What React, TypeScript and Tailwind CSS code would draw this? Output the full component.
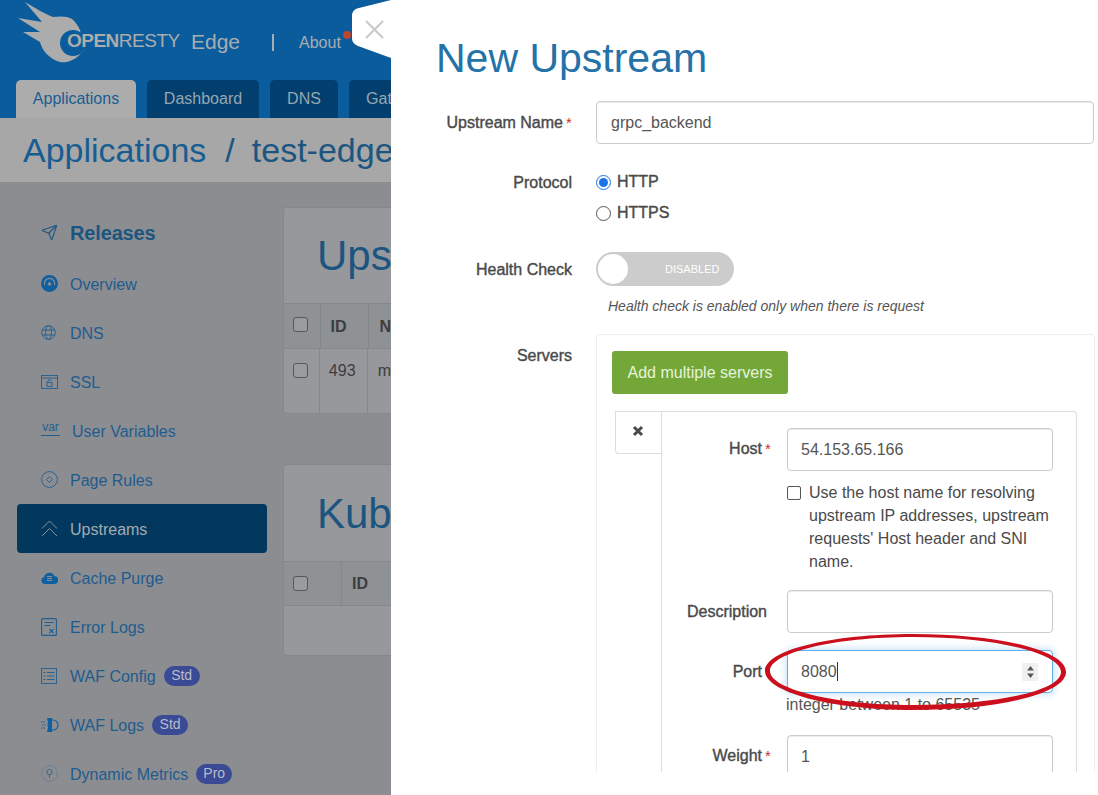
import { Send } from "lucide-react";
import type { ReactNode } from "react";

const sans = "font-['Liberation_Sans',Arial,sans-serif]";
const heavy = "[-webkit-text-stroke:0.4px_currentColor]";

function Overview() {
  return (
    <svg width="17" height="17" viewBox="0 0 17 17">
      <circle cx="8.5" cy="8.5" r="8.5" fill="#0f5f9f" />
      <path d="M3.5 10a5.2 5.2 0 1 1 10 0" fill="none" stroke="#8c8d91" strokeWidth="1.3" />
      <circle cx="8.5" cy="9" r="1.8" fill="#8c8d91" />
    </svg>
  );
}

function Globe() {
  return (
    <svg width="15" height="15" viewBox="0 0 15 15" fill="none" stroke="#1f5f92" strokeWidth="0.9">
      <circle cx="7.5" cy="7.5" r="6.8" />
      <ellipse cx="7.5" cy="7.5" rx="3" ry="6.8" />
      <path d="M1 5h13M1 10h13" />
    </svg>
  );
}

function SslIcon() {
  return (
    <svg width="17" height="14" viewBox="0 0 17 14" fill="none" stroke="#1f5f92" strokeWidth="0.9">
      <rect x="0.5" y="0.5" width="16" height="13" />
      <path d="M0.5 3h16" />
      <rect x="6" y="7.5" width="5" height="4" />
      <path d="M7 7.5V6a1.5 1.5 0 0 1 3 0" />
    </svg>
  );
}

function PageRuleIcon() {
  return (
    <svg width="17" height="17" viewBox="0 0 17 17" fill="none" stroke="#1f5f92" strokeWidth="0.9">
      <circle cx="8.5" cy="8.5" r="7.9" />
      <path d="M8.5 5.5l3 3-3 3-3-3z" />
    </svg>
  );
}

function UpstreamIcon() {
  return (
    <svg width="17" height="17" viewBox="0 0 17 17" fill="none" stroke="#87939c" strokeWidth="1">
      <path d="M1 8.5L8.5 1L16 8.5M1 16L8.5 8.5L16 16" />
    </svg>
  );
}

function CloudIcon() {
  return (
    <svg width="17" height="12" viewBox="0 0 17 12">
      <path d="M4 12a3.6 3.6 0 0 1-.8-7.1A5.4 5.4 0 0 1 13.4 4 4 4 0 0 1 13 12z" fill="#0f5f9f" />
      <path d="M6 4.5h5M6 6.5h5M6 8.5h5" stroke="#8c8d91" strokeWidth="1" />
    </svg>
  );
}

function ErrorIcon() {
  return (
    <svg width="16" height="18" viewBox="0 0 16 18" fill="none" stroke="#1f5f92" strokeWidth="1.1">
      <rect x="0.6" y="0.6" width="14.8" height="16.8" rx="1" />
      <path d="M3.5 4.5h9M3.5 7.5h6M8.5 11l4 4M12.5 11l-4 4" />
    </svg>
  );
}

function ListIcon() {
  return (
    <svg width="16" height="16" viewBox="0 0 16 16" fill="none" stroke="#1f5f92" strokeWidth="0.9">
      <rect x="0.5" y="0.5" width="15" height="15" />
      <path d="M2.5 4.5h2M6 4.5h7.5M2.5 8h2M6 8h7.5M2.5 11.5h2M6 11.5h7.5" />
    </svg>
  );
}

function WafLogIcon() {
  return (
    <svg width="18" height="16" viewBox="0 0 18 16" fill="none" stroke="#0f5f9f">
      <path d="M6 1h5v14H6l1.5-7z" fill="#0f5f9f" stroke="none" />
      <circle cx="12" cy="8" r="5" strokeWidth="1.1" />
      <path d="M0 5h4M1 8h3.5M0 11h4" strokeWidth="1" strokeDasharray="1.5 1" />
    </svg>
  );
}

function MetricIcon() {
  return (
    <svg width="17" height="17" viewBox="0 0 17 17" fill="none" stroke="#1f5f92" strokeWidth="0.8">
      <circle cx="8.5" cy="8.5" r="7.9" stroke="#5b7f9c" />
      <circle cx="8.5" cy="7" r="2.6" />
      <path d="M8.5 9.6v3.4" />
    </svg>
  );
}

function Badge({ text }: { text: string }) {
  return (
    <span className="ml-2 flex h-[20px] w-[36px] items-center justify-center rounded-full bg-[#3a4a94] text-[14px] text-[#b9bcc8]">
      {text}
    </span>
  );
}

function SideItem({ icon, label, badge }: { icon: ReactNode; label: string; badge?: string }) {
  return (
    <div className="flex h-[49px] items-center pl-[24px]">
      <div className="flex w-[29px] shrink-0 items-center">{icon}</div>
      <span className="mt-[2px] text-[16px] text-[#1f5c8e]">{label}</span>
      {badge && <Badge text={badge} />}
    </div>
  );
}

function Sidebar() {
  return (
    <div className="w-[283px] shrink-0 pt-[26px] pl-[17px] pr-[16px]">
      <div className="flex h-[51px] items-center pb-[2px] pl-[24px]">
        <div className="flex w-[29px]">
          <Send size={17} color="#1c5680" strokeWidth={1.6} />
        </div>
        <span className="text-[20px] font-bold tracking-[-0.15px] text-[#1c5680]">Releases</span>
      </div>
      <SideItem icon={<Overview />} label="Overview" />
      <SideItem icon={<Globe />} label="DNS" />
      <SideItem icon={<SslIcon />} label="SSL" />
      <div className="flex h-[49px] items-center pl-[24px]">
        <div className="mr-[12px] -mt-[4px] flex w-[19px] flex-col items-center border-b border-[#1f5f92] pb-[2px] text-[12px] leading-[12px] text-[#1f5f92]">
          var
        </div>
        <span className="mt-[2px] text-[16px] text-[#1f5c8e]">User Variables</span>
      </div>
      <SideItem icon={<PageRuleIcon />} label="Page Rules" />
      <div className="flex h-[49px] items-center rounded-[4px] bg-[#02385e] pl-[24px]">
        <div className="flex w-[29px]">
          <UpstreamIcon />
        </div>
        <span className="mt-[2px] text-[16px] text-[#a3abb2]">Upstreams</span>
      </div>
      <SideItem icon={<CloudIcon />} label="Cache Purge" />
      <SideItem icon={<ErrorIcon />} label="Error Logs" />
      <SideItem icon={<ListIcon />} label="WAF Config" badge="Std" />
      <SideItem icon={<WafLogIcon />} label="WAF Logs" badge="Std" />
      <SideItem icon={<MetricIcon />} label="Dynamic Metrics" badge="Pro" />
    </div>
  );
}

function CheckBox() {
  return <div className="h-[15px] w-[15px] rounded-[3px] border border-[#55575a] bg-[#9a9b9e]" />;
}

function Cards() {
  return (
    <div className="w-[108px] shrink-0 pt-[25px] text-[#3c3d3f]">
      <div className="rounded-l-[3px] border border-r-0 border-[#85878a] bg-[#97989b]">
        <div className="flex h-[95px] items-center pl-[33px] text-[42px] text-[#1c5680]">Ups</div>
        <div className="flex h-[46px] border-t border-b border-[#85878a] bg-[#8e9295] text-[16px] font-bold">
          <div className="h-full w-[38px] border-r border-[#85878a] pt-[13px] pl-[9px]">
            <CheckBox />
          </div>
          <div className="flex h-full w-[51px] items-center border-r border-[#85878a] pt-[2px] pl-[10px]">ID</div>
          <div className="flex items-center pt-[2px] pl-[10px]">N</div>
        </div>
        <div className="flex h-[64px] text-[16px]">
          <div className="h-full w-[38px] border-r border-[#85878a] pt-[14px] pl-[9px]">
            <CheckBox />
          </div>
          <div className="h-full w-[51px] border-r border-[#85878a] pt-[10px] pl-[9px]">493</div>
          <div className="pt-[10px] pl-[10px]">m</div>
        </div>
      </div>
      <div className="mt-[50px] rounded-l-[3px] border border-r-0 border-[#85878a] bg-[#97989b]">
        <div className="flex h-[96px] items-center pl-[33px] text-[42px] text-[#1c5680]">Kub</div>
        <div className="flex h-[45px] border-t border-b border-[#85878a] bg-[#8e9295] text-[16px] font-bold">
          <div className="h-full w-[58px] border-r border-[#85878a] pt-[14px] pl-[9px]">
            <CheckBox />
          </div>
          <div className="flex items-center pl-[10px]">ID</div>
        </div>
        <div className="h-[49px]" />
      </div>
    </div>
  );
}

function Tab({ label, className }: { label: string; className: string }) {
  return (
    <div className={`flex h-[38px] shrink-0 items-center justify-center rounded-t-[5px] text-[16px] ${className}`}>
      {label}
    </div>
  );
}

function Logo() {
  return (
    <div className="relative h-[64px] w-[181px] shrink-0">
      <svg width="90" height="64" viewBox="0 0 90 64" className="absolute top-0 left-0">
        <path
          d="M25 2C35 8 45 14 53 17C60 16 68 16 72 19C76 22 78 26 80 30L84 50C75 62 65 63 60 62C50 59 42 51 40 42L23 32L40 32L18 18L42 22Z"
          fill="#acacac"
        />
        <circle cx="73" cy="43" r="13" fill="#0a5c9c" />
      </svg>
      <div className="absolute top-[30px] left-[67px] flex text-[19px] leading-[22px] tracking-[-0.5px] text-[#acacac]">
        <span className="font-bold">OPEN</span>
        <span>RESTY</span>
      </div>
    </div>
  );
}

function LeftPage() {
  return (
    <div className="relative h-full w-[391px] shrink-0 overflow-hidden bg-[#8c8d91]">
      <div className="h-[118px] bg-[#0a5c9c]">
        <div className="flex h-[80px] items-start">
          <Logo />
          <span className="mt-[28px] ml-[10px] text-[21px] leading-[28px] text-[#a8adb2]">Edge</span>
          <span className="mt-[34px] ml-[32px] h-[17px] w-[2px] shrink-0 bg-[#a8adb2]" />
          <span className="mt-[32px] ml-[25px] text-[16px] leading-[22px] text-[#a8adb2]">About</span>
          <span className="mt-[31px] ml-[2px] h-[8px] w-[8px] shrink-0 rounded-full bg-[#c0452a]" />
        </div>
        <div className="flex gap-[11px] pl-[16px]">
          <Tab label="Applications" className="w-[120px] bg-[#acacac] text-[#185d92]" />
          <Tab label="Dashboard" className="w-[112px] bg-[#023f6e] text-[#98a6b1]" />
          <Tab label="DNS" className="w-[68px] bg-[#023f6e] text-[#98a6b1]" />
          <Tab label="Gat" className="w-[60px] bg-[#023f6e] text-[#98a6b1]" />
        </div>
      </div>
      <div className="flex h-[64px] items-center bg-[#a7a7a8] pl-[23px] text-[34px] whitespace-nowrap text-[#185d92]">
        <span>Applications</span>
        <span className="ml-[19px] text-[#1c5680]">/</span>
        <span className="ml-[17px] text-[#1c5680]">test-edge</span>
      </div>
      <div className="flex">
        <Sidebar />
        <Cards />
      </div>
      <svg width="39" height="58" viewBox="0 0 39 58" className="absolute top-0 right-0">
        <path d="M39 0L7 8C2 9 0 12 0 16V38C0 42 2 44 6 46L39 58Z" fill="#ffffff" />
        <path d="M14 21L31 38M31 21L14 38" stroke="#c8c8c8" strokeWidth="2" />
      </svg>
    </div>
  );
}

function Label({ text, star, className }: { text: string; star?: boolean; className?: string }) {
  return (
    <div className={`flex justify-end text-[16px] leading-[22px] text-[#4a4a4a] ${heavy} ${className ?? ""}`}>
      <span>{text}</span>
      {star && <span className="ml-[3px] w-[6px] text-[15px] text-[#c9302c] [-webkit-text-stroke:0]">*</span>}
    </div>
  );
}

function TextBox({ value, inner }: { value: string; inner?: boolean }) {
  return (
    <input
      readOnly
      value={value}
      className={`block h-[43px] w-full rounded-[4px] border border-[#cccccc] bg-white text-[16px] text-[#555555] shadow-[inset_0_1px_1px_rgba(0,0,0,0.08)] outline-none ${
        inner ? "px-[13px]" : "px-[14px]"
      }`}
    />
  );
}

function ServerItem() {
  return (
    <div className="mt-[17px] grid w-[465px] grid-cols-[46px_1fr] pl-[3px]">
      <div className="flex h-[43px] justify-center rounded-bl-[4px] border-t border-b border-l border-[#dddddd] pt-[12px] pr-[1px]">
        <svg width="12" height="12" viewBox="0 0 12 12" className="mt-[1px]">
          <path d="M2 2L10 10M10 2L2 10" stroke="#4a4a4a" strokeWidth="3" />
        </svg>
      </div>
      <div className="rounded-tr-[4px] border-t border-r border-l border-[#dddddd] pt-[16px] pb-[40px]">
        <div className="grid grid-cols-[109px_266px] gap-x-[16px]">
          <Label text="Host" star className="pt-[10px]" />
          <TextBox value="54.153.65.166" inner />

          <div />
          <div className="mt-[10px] flex text-[16px] leading-[23px] text-[#4a4a4a]">
            <div className="mt-[5px] mr-[8px] h-[14px] w-[14px] shrink-0 rounded-[2px] border border-[#555555] bg-white" />
            <div className="w-[240px]">
              Use the host name for resolving upstream IP addresses, upstream requests' Host header and SNI name.
            </div>
          </div>

          <div className="col-span-2 h-[17px]" />
          <Label text="Description" className="pt-[11px] pr-[4px]" />
          <TextBox value="" inner />

          <div className="col-span-2 h-[17px]" />
          <Label text="Port" className="pt-[11px] pr-[9px]" />
          <div className="flex h-[43px] items-center rounded-[4px] border border-[#66afe9] bg-white px-[13px] text-[16px] text-[#555555] shadow-[0_0_8px_rgba(102,175,233,0.5)]">
            <span>8080</span>
            <span className="h-[19px] w-[1px] bg-[#333333]" />
            <div className="ml-auto mr-[1px] flex h-[18px] w-[16px] items-center justify-center bg-[#f0f0f0]">
              <svg width="9" height="14" viewBox="0 0 9 14">
                <path d="M4.5 1L8 5.5H1zM4.5 13L1 8.5h7z" fill="#555555" />
              </svg>
            </div>
          </div>

          <div />
          <div className="mt-[1px] -ml-[1px] h-[22px] text-[16px] leading-[22px] text-[#555555]">integer between 1 to 65535</div>

          <div className="col-span-2 h-[19px]" />
          <Label text="Weight" star className="pt-[10px]" />
          <TextBox value="1" inner />
        </div>
      </div>
    </div>
  );
}

function FormPanel() {
  return (
    <div className="h-full flex-1 bg-white">
      <div className="h-[772px] overflow-hidden">
        <div className="flex h-[101px] items-start pt-[33px] pl-[45px] text-[41px] leading-[50px] text-[#2472a8]">New Upstream</div>

        <div className="grid grid-cols-[181px_498px] gap-x-[24px]">
          <Label text="Upstream Name" star className="pt-[11px]" />
          <TextBox value="grpc_backend" />

          <div className="col-span-2 h-[27px]" />
          <Label text="Protocol" className="pt-[1px]" />
          <div className="text-[16px] leading-[22px] text-[#4a4a4a]">
            <div className="flex h-[22px] items-center gap-[6px]">
              <span className="flex h-[15px] w-[15px] items-center justify-center rounded-full border-[1.5px] border-[#1a73e8] bg-white">
                <span className="h-[9px] w-[9px] rounded-full bg-[#1a73e8]" />
              </span>
              <span className={heavy}>HTTP</span>
            </div>
            <div className="mt-[9px] flex h-[22px] items-center gap-[6px]">
              <span className="h-[15px] w-[15px] rounded-full border border-[#555555] bg-white" />
              <span className={heavy}>HTTPS</span>
            </div>
          </div>

          <div className="col-span-2 h-[28px]" />
          <Label text="Health Check" className="pt-[7px]" />
          <div>
            <div className="flex h-[34px] w-[138px] items-center rounded-full bg-[#cccccc] pl-[2px]">
              <span className="h-[30px] w-[30px] rounded-full bg-white" />
              <span className="ml-[37px] text-[11px] text-white">DISABLED</span>
            </div>
            <div className="mt-[10px] pl-[12px] text-[14px] leading-[20px] text-[#555555] italic">
              Health check is enabled only when there is request
            </div>
          </div>

          <div className="col-span-2 h-[18px]" />
          <Label text="Servers" className="pt-[11px]" />
          <div className="w-[499px] rounded-t-[4px] border border-b-0 border-[#eeeeee] pt-[16px] pl-[15px]">
            <div className="flex h-[43px] w-[176px] items-center justify-center rounded-[3px] bg-[#73a839] text-[16px] text-[#e8f2dc]">
              Add multiple servers
            </div>
            <ServerItem />
          </div>
        </div>
      </div>
    </div>
  );
}

export default function App() {
  return (
    <div className={`relative flex h-[795px] w-[1098px] overflow-hidden ${sans}`}>
      <LeftPage />
      <FormPanel />
      <svg width="310" height="84" viewBox="0 0 310 84" className="absolute top-[630px] left-[761px]">
        <path
          fillRule="evenodd"
          d="M4 41C4 20 70 4 152 4C236 4 305 20 305 42C305 64 236 80 152 80C70 80 4 62 4 41ZM9 41C9 59 72 75 152 75C234 75 300 61 300 42C300 23 234 7 152 7C72 7 9 23 9 41Z"
          fill="#cc0f1c"
        />
      </svg>
    </div>
  );
}
